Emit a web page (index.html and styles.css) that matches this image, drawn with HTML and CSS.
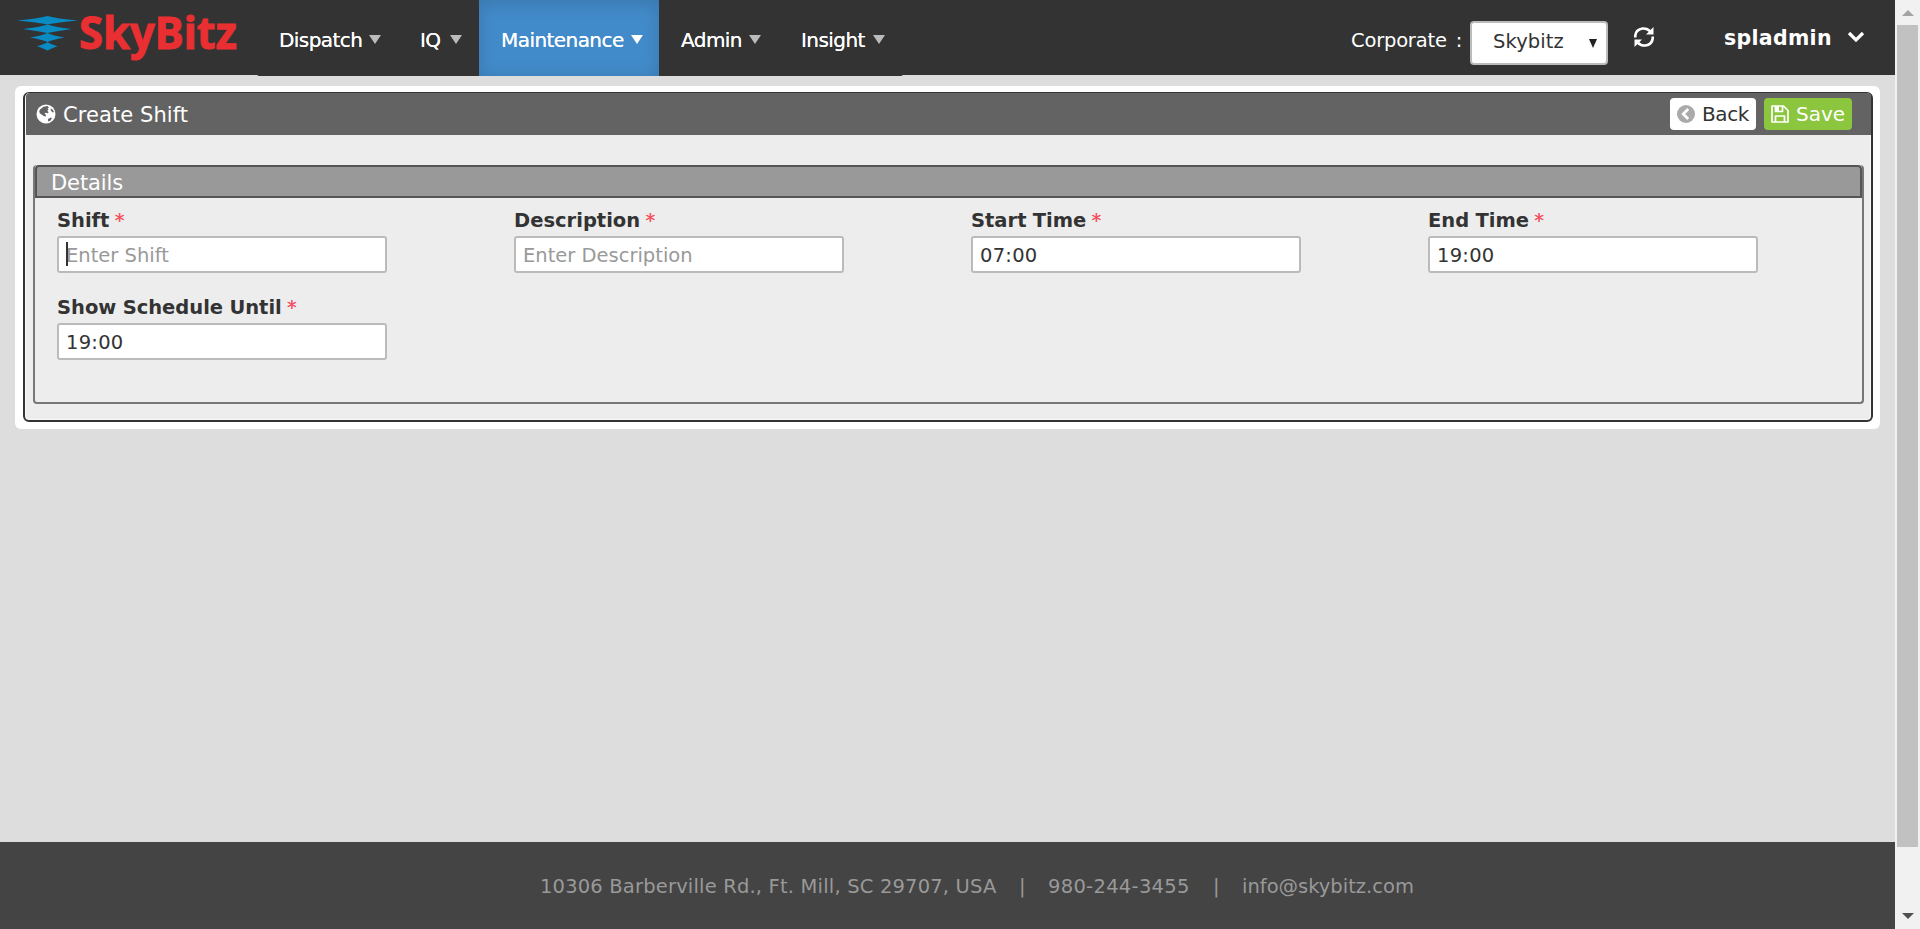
FILE: index.html
```
<!DOCTYPE html>
<html lang="en">
<head>
<meta charset="utf-8">
<title>Create Shift</title>
<link rel="stylesheet" href="styles.css">
</head>
<body>
<div class="window">
  <div class="page">
    <header class="topbar">
      <svg class="logo" viewBox="0 0 257 75" width="257" height="75" role="img" aria-label="SkyBitz">
        <g fill="#0a8bc4">
          <path d="M17 20.5Q38 18.500 47.500 16Q57 18.500 78 20.500Q57 22.500 47.500 24.500Q38 22.500 17 20.500Z"/>
          <path d="M23 29Q40 27 47.500 24.500Q55 27 71.500 29Q55 31.500 47.500 33Q40 31.500 23 29Z"/>
          <path d="M30 37.500Q42 35.500 47.500 33Q53 35.500 64.500 37.500Q53 39.500 47.500 42Q42 39.500 30 37.500Z"/>
          <path d="M37 46.300Q44 44 47.500 42.200Q51 44 57.500 46.300Q51 48.600 47.500 50.500Q44 48.600 37 46.300Z"/>
        </g>
        <text class="logo-text" x="79" y="49" textLength="158" lengthAdjust="spacingAndGlyphs">SkyBitz</text>
      </svg>
      <nav class="menu">
        <a class="menu-item dispatch">Dispatch<i class="arrow"></i></a>
        <a class="menu-item iq">IQ<i class="arrow"></i></a>
        <a class="menu-item maintenance active">Maintenance<i class="arrow"></i></a>
        <a class="menu-item admin">Admin<i class="arrow"></i></a>
        <a class="menu-item insight">Insight<i class="arrow"></i></a>
      </nav>
      <div class="account">
        <span class="corporate">Corporate :</span>
        <div class="select"><span>Skybitz</span><i class="select-arrow"></i></div>
        <svg class="refresh" viewBox="0 0 22 22" width="22" height="22"><g fill="none" stroke="#fff" stroke-width="2.600"><path d="M2.300 11.500V9.500Q3 3.500 9.500 2.500Q14 2 17.500 5.500"/><path d="M19.700 10.500V12.500Q19 18.500 12.500 19.500Q8 20 4.500 16.500"/></g><path fill="#fff" d="M20.500 1v7.500H13zM1.500 21v-7.500H9z"/></svg>
        <span class="user">spladmin</span>
        <svg class="chevron" viewBox="0 0 18 14" width="18" height="14"><path d="M2 3l7 7 7-7" fill="none" stroke="#fff" stroke-width="3.200"/></svg>
      </div>
    </header>
    <main class="content">
      <div class="sheet">
      <section class="panel">
        <div class="panel-head">
          <svg class="globe" viewBox="0 0 20 20" width="20" height="20"><circle cx="10" cy="10" r="9.500" fill="#fff"/><path fill="#636363" d="M4 5.500L7.500 2.700 11.500 2l1.500 1.500-1.500 1 1 1-1.200 1.300 1.400 1.400-1 1.100-2.200-.6-.9 1 1.500 1.300-.6 1.700-2.100-1L4 9.500 3.200 7.500zM14.800 4.500l1.800.9 1.400 2.600-1.300.4-1.900-1.800zM12 15l3-1.500 1 .8-2 2.700-1.800.6z"/></svg>
          <h1 class="title">Create Shift</h1>
          <button class="btn back"><svg viewBox="0 0 18 18" width="18" height="18"><circle cx="9" cy="9" r="9" fill="#aaa"/><path d="M11.200 4L6.200 9l5 5" fill="none" stroke="#fff" stroke-width="2.700"/></svg><span>Back</span></button>
          <button class="btn save"><svg viewBox="0 0 18 18" width="18" height="18"><path d="M1 1h11.500L17 5.500V17H1zM4.500 17v-6h9v6M4.500 1v5.500h7V1" fill="none" stroke="#fff" stroke-width="1.700" stroke-linejoin="round"/><path fill="#fff" d="M5 1.500h3V6H5z"/></svg><span>Save</span></button>
        </div>
        <div class="details">
          <h2 class="details-head">Details</h2>
          <div class="fields">
            <label class="field focused"><span class="label">Shift <em>*</em></span><input type="text" placeholder="Enter Shift"></label>
            <label class="field"><span class="label">Description <em>*</em></span><input type="text" placeholder="Enter Description"></label>
            <label class="field"><span class="label">Start Time <em>*</em></span><input type="text" value="07:00"></label>
            <label class="field"><span class="label">End Time <em>*</em></span><input type="text" value="19:00"></label>
            <label class="field"><span class="label">Show Schedule Until <em>*</em></span><input type="text" value="19:00"></label>
          </div>
        </div>
      </section>
      </div>
    </main>
    <footer class="footer">
      <span class="address">10306 Barberville Rd., Ft. Mill, SC 29707, USA</span>
      <span class="bar">|</span>
      <span class="phone">980-244-3455</span>
      <span class="bar">|</span>
      <span>info@skybitz.com</span>
    </footer>
  </div>
  <div class="scrollbar">
    <i class="scroll-up"></i>
    <i class="thumb"></i>
    <i class="scroll-down"></i>
  </div>
</div>
</body>
</html>
```
FILE: styles.css
```
* { box-sizing: border-box; }
body { margin: 0; overflow: hidden; font-family: Verdana, "DejaVu Sans", sans-serif; font-size: 19.5px; color: #333; }
.window { display: flex; width: 1920px; height: 929px; }
.page { display: flex; flex-direction: column; width: 1895px; background: #ddd; }

.topbar { display: flex; height: 75px; background: #333; flex: none; }
.logo { flex: none; display: block; }
.logo-text { font: bold 44.5px "Noto Sans", "Open Sans", sans-serif; fill: #e92f31; stroke: #e92f31; stroke-width: 1px; }
.menu { display: flex; height: 76px; width: 646px; background: #333; border-radius: 2px; flex: none; }
.menu-item { display: flex; align-items: center; justify-content: flex-start; height: 76px; padding: 3px 0 0 22px; color: #fff; font-size: 20px; letter-spacing: -.56px; text-shadow: 0 0 .5px #fff; }
.dispatch { width: 142px; }
.iq { width: 80px; padding-left: 21px; }
.maintenance { width: 180px; }
.admin { width: 120px; }
.insight { width: 124px; }
.active { background: #428bca; box-shadow: inset 0 3px 18px rgba(0, 0, 0, .15); }
.arrow { border: 6.5px solid transparent; border-top: 9px solid #bbb; border-bottom: 0; margin-left: 7px; }
.iq .arrow { margin-left: 9px; }
.insight .arrow { margin-left: 8px; }
.active .arrow { border-top-color: #fff; }

.account { display: flex; flex: 1; padding-left: 448px; color: #fff; }
.corporate { width: 119px; padding-top: 29px; line-height: 24px; letter-spacing: -.2px; word-spacing: 3px; white-space: nowrap; }
.select { display: flex; justify-content: space-between; width: 138px; height: 44px; margin-top: 21px; padding: 0 9px 4px 21px; align-items: center; background: #fff; border: 2px solid #bbb; border-radius: 4px; color: #333; letter-spacing: .1px; }
.select-arrow { border: 4.5px solid transparent; border-top: 9px solid #222; border-bottom: 0; margin-top: 5px; }
.refresh { margin: 26px 0 0 25px; }
.user { width: 123px; margin-left: 69px; padding-top: 26px; line-height: 24px; font-weight: bold; font-size: 20.5px; letter-spacing: .3px; }
.chevron { margin-top: 30px; }

.content { flex: 1; padding: 11px 15px 0; }
.sheet { height: 343px; padding: 6px 7px 0 8px; background: #fff; border-radius: 6px; }
.panel { height: 330px; border: 2px solid #333; border-top-width: 1px; border-radius: 6px; background: #ededed; box-shadow: inset 0 0 0 1px #f8f8f8; }
.panel-head { display: flex; align-items: center; height: 42px; margin-left: 1px; padding: 0 19px 0 10px; background: #636363; border-radius: 4px 4px 0 0; color: #fff; }
.title { flex: 1; margin: 0 0 0 7px; padding-top: 1px; font-size: 21px; font-weight: normal; line-height: 24px; letter-spacing: .08px; }
.btn { display: flex; align-items: center; height: 32px; margin: 0 0 0 8px; padding: 0 7px; border: 0; border-radius: 4px; font: 20px Verdana, "DejaVu Sans", sans-serif; gap: 7px; }
.back { width: 86px; background: #fff; color: #333; letter-spacing: -.4px; }
.save { width: 88px; background: #8cc63f; color: #fff; }
.btn svg { flex: none; }

.details { width: 1831px; height: 239px; margin: 30px 0 0 8px; border: 2px solid #777; border-top: 0; border-radius: 4px; }
.details-head { height: 33px; margin: 0; padding: 1px 0 0 14px; border: 2px solid #555; border-radius: 4px 4px 0 0; background: #999; color: #fff; font-size: 21px; font-weight: normal; line-height: 30px; letter-spacing: -.1px; }
.fields { display: grid; grid-template-columns: repeat(4, 457px); row-gap: 22px; padding: 10px 0 0 22px; width: 1827px; }
.field { position: relative; display: flex; flex-direction: column; width: 329.500px; }
.label { height: 24px; margin-bottom: 4px; padding-top: 1px; line-height: 24px; font-weight: bold; white-space: nowrap; word-spacing: -.5px; }
.label em { color: #f5515f; font-style: normal; font-weight: normal; margin-left: -1px; text-shadow: 0 0 .5px #f5515f; }
.field input { width: 100%; height: 37px; margin: 0; padding: 1px 7px 0; border: 2px solid #bbb; border-radius: 3px; background: #fff; color: #333; font: 19.5px Verdana, "DejaVu Sans", sans-serif; }
.field input:not(:placeholder-shown) { letter-spacing: .25px; }
.field input::placeholder { color: #999; }
.focused::after { content: ""; position: absolute; left: 9px; top: 34px; width: 2px; height: 24px; background: #333; }

.footer { display: flex; flex: none; justify-content: flex-start; height: 87px; padding: 33px 0 0 540px; background: #444; border-bottom: 2px solid #464444; color: #999; line-height: 24px; white-space: nowrap; }
.address { width: 479px; letter-spacing: .18px; }
.bar { width: 29px; }
.phone { width: 165px; letter-spacing: .3px; }

.scrollbar { display: flex; flex-direction: column; align-items: center; width: 25px; height: 929px; padding: 10px 0 10px; background: #f1f1f1; }
.scroll-up { border: 6px solid transparent; border-bottom-color: #a3a3a3; border-top: 0; }
.thumb { width: 21px; height: 822px; margin-top: 9px; background: #c1c1c1; }
.scroll-down { margin-top: auto; border: 6px solid transparent; border-top-color: #505050; border-bottom: 0; }
```
